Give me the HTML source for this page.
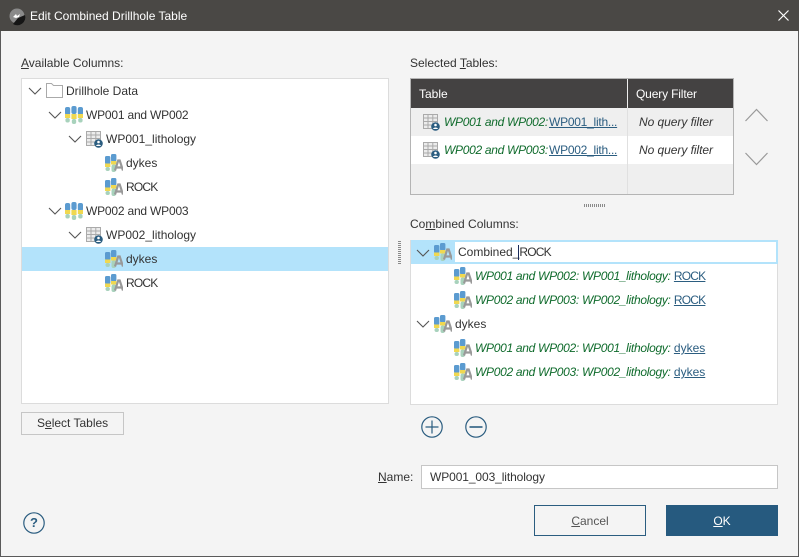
<!DOCTYPE html>
<html><head><meta charset="utf-8"><style>
html,body{margin:0;padding:0;width:799px;height:557px;overflow:hidden;background:#f4f4f4}
body{font-family:"Liberation Sans",sans-serif;font-size:12px;color:#333;position:relative}
.a{position:absolute;white-space:nowrap;line-height:16px}
.b{position:absolute;box-sizing:border-box}
u{text-underline-offset:1px}
.g{color:#0f6b2c;font-style:italic;letter-spacing:-.3px}
.l{color:#2b5d80;text-decoration:underline}
.t{letter-spacing:-.2px}
.r{letter-spacing:-.8px}
svg{position:absolute;overflow:visible}
</style></head><body>
<svg width="0" height="0" style="position:absolute">
<defs>
<symbol id="chev" viewBox="0 0 14 8"><path d="M1 1L7 7L13 1" fill="none" stroke="#555" stroke-width="1.1"/></symbol>
<symbol id="attr" viewBox="0 0 18 18">
<rect x="0" y="2" width="5.4" height="8" rx="1.5" fill="#5b9bd0"/><rect x="0" y="9.5" width="5.4" height="3.5" fill="#f0d850"/><rect x="0.5" y="13" width="4.4" height="4" rx="2" fill="#a8d2bc"/>
<rect x="6" y="0" width="5.4" height="7.5" rx="1.5" fill="#5b9bd0"/><rect x="6" y="7" width="5.4" height="3.5" fill="#f0d850"/><rect x="6.5" y="10.5" width="4.4" height="7.5" rx="2" fill="#a8d2bc"/>
<path d="M10 16.5L13.2 6.5h1.5L18 16.5M11.2 13.5h5.6" fill="none" stroke="#999" stroke-width="2.2"/>
</symbol>
<symbol id="holes" viewBox="0 0 18 18">
<rect x="0" y="1" width="5.2" height="8" rx="2" fill="#5b9bd0"/><rect x="0" y="8" width="5.2" height="4" fill="#f0d850"/><rect x="0.4" y="12" width="4.4" height="4.5" rx="2" fill="#a8d2bc"/>
<rect x="6.4" y="0" width="5.2" height="8" rx="2" fill="#5b9bd0"/><rect x="6.4" y="8" width="5.2" height="5" fill="#f0d850"/><rect x="6.8" y="13" width="4.4" height="5" rx="2" fill="#a8d2bc"/>
<rect x="12.8" y="1" width="5.2" height="8" rx="2" fill="#5b9bd0"/><rect x="12.8" y="8" width="5.2" height="4" fill="#f0d850"/><rect x="13.2" y="12" width="4.4" height="4.5" rx="2" fill="#a8d2bc"/>
</symbol>
<symbol id="table" viewBox="0 0 17 17">
<rect x="0.5" y="0.5" width="14" height="14" fill="#ececec" stroke="#aaa"/>
<path d="M0.5 4h14M0.5 7.5h14M0.5 11h14M5 .5v14M9.8 .5v14" stroke="#aaa" fill="none"/>
<circle cx="12.5" cy="12.5" r="4.3" fill="#2b5d80"/><circle cx="12.5" cy="11" r="1.3" fill="#fff"/><path d="M10 15c.5-2 4.5-2 5 0z" fill="#fff"/>
</symbol>
</defs></svg>

<!-- Title bar -->
<div class="b" style="left:0;top:0;width:799px;height:31px;background:#4a4845"></div>
<svg style="left:9px;top:8px" width="16" height="16" viewBox="0 0 16 16"><circle cx="8" cy="8" r="7.5" fill="#8a8a8a"/><path d="M4 16a8 8 0 0 0 12-9L9 10z" fill="#151515"/><path d="M4 9l3-3 1 2 3-2-1 3-3 1z" fill="#fff"/></svg>
<div class="a" style="left:30px;top:8px;color:#fff">Edit Combined Drillhole Table</div>
<svg style="left:778px;top:10px" width="11" height="11" viewBox="0 0 11 11"><path d="M.5.5l10 10M10.5.5l-10 10" stroke="#fff" stroke-width="1.2" fill="none"/></svg>
<!-- Window border -->
<div class="b" style="left:0;top:31px;width:799px;height:526px;border:1px solid #5a5a5a;border-top:0"></div>

<!-- Left -->
<div class="a" style="left:21px;top:55px"><u>A</u>vailable Columns:</div>
<div class="b" style="left:21px;top:78px;width:368px;height:326px;background:#fff;border:1px solid #dcdcdc"></div>
<div class="b" style="left:22px;top:247px;width:366px;height:24px;background:#b3e3fb"></div>

<svg style="left:28px;top:87px" width="14" height="8"><use href="#chev"/></svg>
<svg style="left:46px;top:83px" width="17" height="15" viewBox="0 0 17 15"><path d="M.5 14.5V.5h5l2 2h9v12z" fill="#fff" stroke="#aaa"/></svg>
<div class="a" style="left:66px;top:83px">Drillhole Data</div>

<svg style="left:48px;top:111px" width="14" height="8"><use href="#chev"/></svg>
<svg style="left:65px;top:106px" width="18" height="18"><use href="#holes"/></svg>
<div class="a t" style="left:86px;top:107px">WP001 and WP002</div>

<svg style="left:68px;top:135px" width="14" height="8"><use href="#chev"/></svg>
<svg style="left:86px;top:131px" width="17" height="17"><use href="#table"/></svg>
<div class="a" style="left:106px;top:131px">WP001_lithology</div>

<svg style="left:105px;top:154px" width="18" height="18"><use href="#attr"/></svg>
<div class="a" style="left:126px;top:155px">dykes</div>
<svg style="left:105px;top:178px" width="18" height="18"><use href="#attr"/></svg>
<div class="a r" style="left:126px;top:179px">ROCK</div>

<svg style="left:48px;top:207px" width="14" height="8"><use href="#chev"/></svg>
<svg style="left:65px;top:202px" width="18" height="18"><use href="#holes"/></svg>
<div class="a t" style="left:86px;top:203px">WP002 and WP003</div>

<svg style="left:68px;top:231px" width="14" height="8"><use href="#chev"/></svg>
<svg style="left:86px;top:227px" width="17" height="17"><use href="#table"/></svg>
<div class="a" style="left:106px;top:227px">WP002_lithology</div>

<svg style="left:105px;top:250px" width="18" height="18"><use href="#attr"/></svg>
<div class="a" style="left:126px;top:251px">dykes</div>
<svg style="left:105px;top:274px" width="18" height="18"><use href="#attr"/></svg>
<div class="a r" style="left:126px;top:275px">ROCK</div>

<div class="b" style="left:21px;top:412px;width:103px;height:23px;border:1px solid #c6c6c6;background:#f4f4f4"></div>
<div class="a" style="left:37px;top:415px">S<u>e</u>lect Tables</div>

<svg style="left:23px;top:512px" width="22" height="22" viewBox="0 0 22 22"><circle cx="11" cy="11" r="10.2" fill="none" stroke="#2b5d80" stroke-width="1.2"/></svg>
<div class="a" style="left:23px;top:515px;width:22px;text-align:center;font-weight:bold;font-size:13px;color:#2b5d80">?</div>

<!-- Splitter -->
<div class="b" style="left:398px;top:241px;width:3px;height:23px;background:repeating-linear-gradient(#8a8a8a 0 1px,#f4f4f4 1px 2px)"></div>

<!-- Selected tables -->
<div class="a" style="left:410px;top:55px">Selected <u>T</u>ables:</div>
<div class="b" style="left:410px;top:78px;width:324px;height:117px;background:#efefef;border:1px solid #b4b4b4"></div>
<div class="b" style="left:411px;top:79px;width:322px;height:29px;background:#444242"></div>
<div class="b" style="left:411px;top:136px;width:322px;height:28px;background:#fff"></div>
<div class="b" style="left:627px;top:79px;width:1px;height:115px;background:#e0e0e0"></div>
<div class="b" style="left:627px;top:79px;width:1px;height:29px;background:#eee"></div>
<div class="a" style="left:419px;top:86px;color:#fff">Table</div>
<div class="a" style="left:636px;top:86px;color:#fff;letter-spacing:-.15px">Query Filter</div>

<svg style="left:423px;top:114px" width="17" height="17"><use href="#table"/></svg>
<div class="a g" style="left:444px;top:114px">WP001 and WP002:</div>
<div class="a l" style="left:549px;top:114px;letter-spacing:-.25px">WP001_lith...</div>
<div class="a" style="left:639px;top:114px;font-style:italic;letter-spacing:-.05px">No query filter</div>

<svg style="left:423px;top:142px" width="17" height="17"><use href="#table"/></svg>
<div class="a g" style="left:444px;top:142px">WP002 and WP003:</div>
<div class="a l" style="left:549px;top:142px;letter-spacing:-.25px">WP002_lith...</div>
<div class="a" style="left:639px;top:142px;font-style:italic;letter-spacing:-.05px">No query filter</div>

<svg style="left:745px;top:108px" width="23" height="14" viewBox="0 0 23 14"><path d="M.5 13L11.5 1.5L22.5 13" fill="none" stroke="#999" stroke-width="1.2"/></svg>
<svg style="left:745px;top:152px" width="23" height="14" viewBox="0 0 23 14"><path d="M.5 1L11.5 12.5L22.5 1" fill="none" stroke="#999" stroke-width="1.2"/></svg>

<div class="b" style="left:584px;top:204px;width:21px;height:3px;background:repeating-linear-gradient(90deg,#8a8a8a 0 1px,#f4f4f4 1px 2px)"></div>

<!-- Combined columns -->
<div class="a" style="left:410px;top:216px">Co<u>m</u>bined Columns:</div>
<div class="b" style="left:410px;top:240px;width:368px;height:165px;background:#fff;border:1px solid #dcdcdc"></div>
<div class="b" style="left:411px;top:240px;width:367px;height:24px;background:#b3e3fb"></div>
<div class="b" style="left:455px;top:242px;width:321px;height:20px;background:#fff"></div>
<svg style="left:416px;top:249px" width="14" height="8"><use href="#chev"/></svg>
<svg style="left:434px;top:243px" width="18" height="18"><use href="#attr"/></svg>
<div class="a" style="left:458px;top:244px">Combined_<span class="r">ROCK</span></div>
<div class="b" style="left:518px;top:245px;width:1px;height:15px;background:#1a2a5a"></div>

<svg style="left:454px;top:267px" width="18" height="18"><use href="#attr"/></svg>
<div class="a" style="left:475px;top:268px"><span class="g">WP001 and WP002: WP001_lithology:</span> <span class="l r">ROCK</span></div>
<svg style="left:454px;top:291px" width="18" height="18"><use href="#attr"/></svg>
<div class="a" style="left:475px;top:292px"><span class="g">WP002 and WP003: WP002_lithology:</span> <span class="l r">ROCK</span></div>

<svg style="left:416px;top:320px" width="14" height="8"><use href="#chev"/></svg>
<svg style="left:434px;top:315px" width="18" height="18"><use href="#attr"/></svg>
<div class="a" style="left:455px;top:316px">dykes</div>

<svg style="left:454px;top:339px" width="18" height="18"><use href="#attr"/></svg>
<div class="a" style="left:475px;top:340px"><span class="g">WP001 and WP002: WP001_lithology:</span> <span class="l">dykes</span></div>
<svg style="left:454px;top:363px" width="18" height="18"><use href="#attr"/></svg>
<div class="a" style="left:475px;top:364px"><span class="g">WP002 and WP003: WP002_lithology:</span> <span class="l">dykes</span></div>

<svg style="left:421px;top:416px" width="22" height="22" viewBox="0 0 22 22"><circle cx="11" cy="11" r="10.2" fill="none" stroke="#2b5d80" stroke-width="1.2"/><path d="M4.5 11h13M11 4.5v13" stroke="#2b5d80" stroke-width="1.2" fill="none"/></svg>
<svg style="left:465px;top:416px" width="22" height="22" viewBox="0 0 22 22"><circle cx="11" cy="11" r="10.2" fill="none" stroke="#2b5d80" stroke-width="1.2"/><path d="M4.5 11h13" stroke="#2b5d80" stroke-width="1.6" fill="none"/></svg>

<!-- Name -->
<div class="a" style="left:378px;top:469px"><u>N</u>ame:</div>
<div class="b" style="left:421px;top:465px;width:357px;height:24px;background:#fff;border:1px solid #c6c6c6"></div>
<div class="a" style="left:430px;top:469px;letter-spacing:-.1px">WP001_003_lithology</div>

<!-- Buttons -->
<div class="b" style="left:534px;top:505px;width:112px;height:31px;border:1px solid #2b5d80"></div>
<div class="a" style="left:534px;top:513px;width:112px;text-align:center;color:#555"><u>C</u>ancel</div>
<div class="b" style="left:666px;top:505px;width:112px;height:31px;background:#265a7f"></div>
<div class="a" style="left:666px;top:513px;width:112px;text-align:center;color:#fff"><u>O</u>K</div>
</body></html>
